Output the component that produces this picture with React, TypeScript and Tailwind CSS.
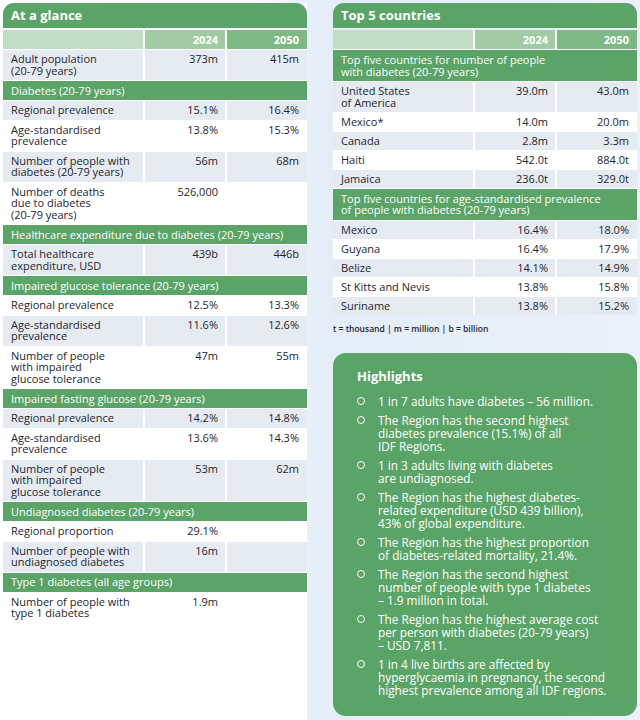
import type { ReactNode } from 'react';

type Row =
  | { t: 'sec'; label: string[] }
  | { t: 'row'; label: string[]; a?: string; b?: string; shade?: boolean };

// left table
const glance: Row[] = [
  { t: 'row', label: ['Adult population', '(20-79 years)'], a: '373m', b: '415m', shade: true },
  { t: 'sec', label: ['Diabetes (20-79 years)'] },
  { t: 'row', label: ['Regional prevalence'], a: '15.1%', b: '16.4%', shade: true },
  { t: 'row', label: ['Age-standardised', 'prevalence'], a: '13.8%', b: '15.3%' },
  { t: 'row', label: ['Number of people with', 'diabetes (20-79 years)'], a: '56m', b: '68m', shade: true },
  { t: 'row', label: ['Number of deaths', 'due to diabetes', '(20-79 years)'], a: '526,000' },
  { t: 'sec', label: ['Healthcare expenditure due to diabetes (20-79 years)'] },
  { t: 'row', label: ['Total healthcare', 'expenditure, USD'], a: '439b', b: '446b', shade: true },
  { t: 'sec', label: ['Impaired glucose tolerance (20-79 years)'] },
  { t: 'row', label: ['Regional prevalence'], a: '12.5%', b: '13.3%' },
  { t: 'row', label: ['Age-standardised', 'prevalence'], a: '11.6%', b: '12.6%', shade: true },
  { t: 'row', label: ['Number of people', 'with impaired', 'glucose tolerance'], a: '47m', b: '55m' },
  { t: 'sec', label: ['Impaired fasting glucose (20-79 years)'] },
  { t: 'row', label: ['Regional prevalence'], a: '14.2%', b: '14.8%', shade: true },
  { t: 'row', label: ['Age-standardised', 'prevalence'], a: '13.6%', b: '14.3%' },
  { t: 'row', label: ['Number of people', 'with impaired', 'glucose tolerance'], a: '53m', b: '62m', shade: true },
  { t: 'sec', label: ['Undiagnosed diabetes (20-79 years)'] },
  { t: 'row', label: ['Regional proportion'], a: '29.1%' },
  { t: 'row', label: ['Number of people with', 'undiagnosed diabetes'], a: '16m', shade: true },
  { t: 'sec', label: ['Type 1 diabetes (all age groups)'] },
  { t: 'row', label: ['Number of people with', 'type 1 diabetes'], a: '1.9m' },
];

// right table
const countries: Row[] = [
  { t: 'sec', label: ['Top five countries for number of people', 'with diabetes (20-79 years)'] },
  { t: 'row', label: ['United States', 'of America'], a: '39.0m', b: '43.0m', shade: true },
  { t: 'row', label: ['Mexico*'], a: '14.0m', b: '20.0m' },
  { t: 'row', label: ['Canada'], a: '2.8m', b: '3.3m', shade: true },
  { t: 'row', label: ['Haiti'], a: '542.0t', b: '884.0t' },
  { t: 'row', label: ['Jamaica'], a: '236.0t', b: '329.0t', shade: true },
  { t: 'sec', label: ['Top five countries for age-standardised prevalence', 'of people with diabetes (20-79 years)'] },
  { t: 'row', label: ['Mexico'], a: '16.4%', b: '18.0%', shade: true },
  { t: 'row', label: ['Guyana'], a: '16.4%', b: '17.9%' },
  { t: 'row', label: ['Belize'], a: '14.1%', b: '14.9%', shade: true },
  { t: 'row', label: ['St Kitts and Nevis'], a: '13.8%', b: '15.8%' },
  { t: 'row', label: ['Suriname'], a: '13.8%', b: '15.2%', shade: true },
];

const highlights: string[][] = [
  ['1 in 7 adults have diabetes – 56 million.'],
  ['The Region has the second highest', 'diabetes prevalence (15.1%) of all', 'IDF Regions.'],
  ['1 in 3 adults living with diabetes', 'are undiagnosed.'],
  ['The Region has the highest diabetes-', 'related expenditure (USD 439 billion),', '43% of global expenditure.'],
  ['The Region has the highest proportion', 'of diabetes-related mortality, 21.4%.'],
  ['The Region has the second highest', 'number of people with type 1 diabetes', '– 1.9 million in total.'],
  ['The Region has the highest average cost', 'per person with diabetes (20-79 years)', '– USD 7,811.'],
  ['1 in 4 live births are affected by', 'hyperglycaemia in pregnancy, the second', 'highest prevalence among all IDF regions.'],
];

function Lines({ lines }: { lines: string[] }) {
  return (
    <>
      {lines.map((l, i) => (
        <span key={i} className="block whitespace-nowrap">
          {l}
        </span>
      ))}
    </>
  );
}

function DataTable({ title, rows, rowPb }: { title: string; rows: Row[]; rowPb: string }) {
  const out: ReactNode[] = [];
  rows.forEach((r, i) => {
    if (r.t === 'sec') {
      const tall = r.label.length > 1;
      out.push(
        <div
          key={i}
          className={`col-span-3 bg-[#5ba467] pl-2 text-white ${
            tall ? 'pt-[4px] pb-[4px]' : 'flex h-[19px] items-center'
          }`}
        >
          <div>
            <Lines lines={r.label} />
          </div>
        </div>
      );
      return;
    }
    const bg = r.shade ? 'bg-[#e6ebf2]' : 'bg-white';
    out.push(
      <div key={i + 'l'} className={`${bg} pl-2 pt-[3px] ${rowPb}`}>
        <Lines lines={r.label} />
      </div>,
      <div key={i + 'a'} className={`${bg} pr-[7px] pt-[3px] text-right`}>
        {r.a}
      </div>,
      <div key={i + 'b'} className={`${bg} pr-[8px] pt-[3px] text-right`}>
        {r.b}
      </div>
    );
  });

  return (
    <div className="flex w-[304px] flex-col">
      <div className="flex h-[25px] items-center rounded-t-[11px] bg-[#5ba467] pl-2 text-[13px] font-bold text-white">
        {title}
      </div>
      <div className="mt-[2px] grid grid-cols-[140px_80px_80px] gap-x-[2px] gap-y-px bg-white text-[11px] leading-[11.5px] font-medium text-[#1d2531]">
        <div className="h-[19px] bg-[#c1dec4]" />
        <div className="flex h-[19px] items-center justify-end bg-[#a0cba4] pr-[7px] font-bold text-white">
          2024
        </div>
        <div className="flex h-[19px] items-center justify-end bg-[#7db885] pr-[8px] font-bold text-white">
          2050
        </div>
        {out}
      </div>
    </div>
  );
}

export default function App() {
  return (
    <div className="flex h-[720px] w-[640px] gap-[26px] overflow-hidden bg-[linear-gradient(90deg,#ffffff_0%,#fbfcfe_40%,#e4edf8_50%,#eaf1fa_100%)] pl-[3px] pt-[3px] font-['Open_Sans',sans-serif]">
      {/* Left: At a glance */}
      <div className="h-full w-[304px] shrink-0 bg-white">
        <DataTable title="At a glance" rows={glance} rowPb="pb-[4px]" />
      </div>

      {/* Right: Top 5 + highlights */}
      <div className="flex w-[304px] shrink-0 flex-col">
        <DataTable title="Top 5 countries" rows={countries} rowPb="pb-[3.5px]" />
        <p className="mt-[8px] text-[8.5px] leading-[12px] font-semibold text-[#1d2531]">
          t = thousand | m = million | b = billion
        </p>
        <div className="mt-[18px] rounded-[13px] bg-[#5ba467] pb-[19px] pl-[24px] pr-3 pt-[15px] text-white">
          <h3 className="text-[13px] leading-[16px] font-bold">Highlights</h3>
          <ul className="mt-[11px] flex flex-col gap-[6px] text-[11.8px] leading-[13px] font-medium">
            {highlights.map((h, i) => (
              <li key={i} className="flex gap-[13px]">
                <span className="mt-[2.5px] h-[8px] w-[8px] shrink-0 rounded-full border-[1.75px] border-white" />
                <div>
                  <Lines lines={h} />
                </div>
              </li>
            ))}
          </ul>
        </div>
      </div>
    </div>
  );
}
